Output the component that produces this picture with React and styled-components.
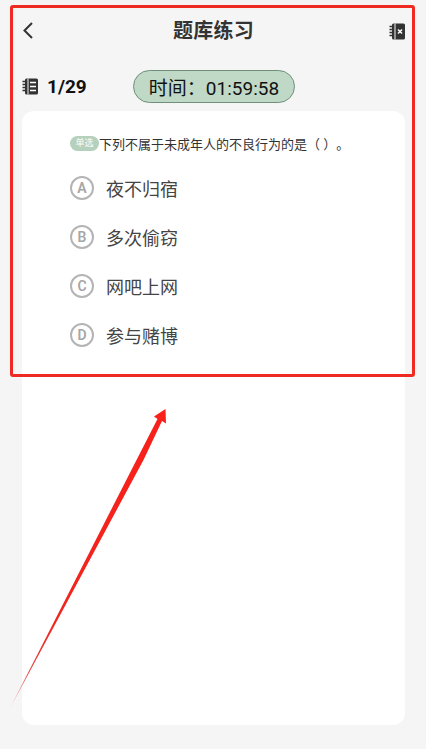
import React from 'react';
import styled, { createGlobalStyle } from 'styled-components';

const GlobalStyle = createGlobalStyle`
  html, body {
    margin: 0;
    padding: 0;
    background: #f5f5f5;
  }
  * {
    box-sizing: border-box;
  }
`;

const Page = styled.div`
  position: relative;
  width: 426px;
  height: 749px;
  overflow: hidden;
  background: #f5f5f5;
  font-family: Roboto, "Noto Sans CJK SC", sans-serif;
  color: #333;
`;

const Header = styled.header`
  height: 62px;
  padding: 0 21px 0 22px;
  display: flex;
  align-items: center;
  justify-content: space-between;
`;

const Title = styled.h1`
  margin: 0;
  font-size: 20px;
  line-height: 26px;
  font-weight: 700;
  color: #333;
  letter-spacing: 0.2px;
`;

const IconButton = styled.div`
  width: ${({ $w }) => $w}px;
  height: 20px;
  display: flex;
  align-items: center;
`;

const StatusRow = styled.div`
  height: 49px;
  padding: 0 0 0 22px;
  display: flex;
  align-items: center;
`;

const Counter = styled.div`
  width: 111px;
  display: flex;
  align-items: center;
  gap: 9px;
  font-size: 19px;
  font-weight: 700;
  color: #111;
`;

const Timer = styled.div`
  width: 162px;
  height: 33px;
  border: 1px solid #6f8f7a;
  border-radius: 17px;
  background: #c0d8c6;
  display: flex;
  align-items: center;
  justify-content: center;
  font-size: 19px;
  color: #111;
  text-spacing-trim: space-all;
`;

const Card = styled.main`
  width: 383px;
  height: 614px;
  margin-left: 22px;
  padding: 22px 0 0 48px;
  background: #fff;
  border-radius: 12px;
`;

const Question = styled.div`
  display: flex;
  align-items: center;
  height: 20px;
  font-size: 13px;
  color: #333;
  white-space: pre;
  text-spacing-trim: space-all;
`;

const Tag = styled.span`
  width: 29px;
  height: 15px;
  border-radius: 8px;
  background: #b5d0bc;
  color: #fff;
  font-size: 9px;
  line-height: 15px;
  text-align: center;
`;

const OptionList = styled.div`
  margin-top: 23px;
  display: flex;
  flex-direction: column;
  gap: 25px;
`;

const Option = styled.div`
  height: 24px;
  display: flex;
  align-items: center;
  gap: 12px;
  font-size: 18px;
  color: #444;
`;

const Letter = styled.span`
  width: 24px;
  height: 24px;
  border: 2px solid #b4b4b4;
  border-radius: 50%;
  display: flex;
  align-items: center;
  justify-content: center;
  font-size: 14px;
  font-weight: 600;
  color: #a6a6a6;
`;

const Highlight = styled.div`
  position: absolute;
  left: 10px;
  top: 5px;
  width: 405px;
  height: 372px;
  border: 3px solid #ee2a22;
  border-radius: 3px;
  pointer-events: none;
`;

const ArrowLayer = styled.svg`
  position: absolute;
  left: 0;
  top: 400px;
  pointer-events: none;
`;

const BackIcon = () => (
  <svg width="12" height="20" viewBox="0 0 12 20" fill="none">
    <path d="M10 2 L2.5 9.5 L10 17" stroke="#333" strokeWidth="2" />
  </svg>
);

const NotebookIcon = ({ crossed }) => (
  <svg width="16" height="17" viewBox="0 0 16 17">
    <rect x="3" y="0.5" width="13" height="16" rx="1.5" fill="#333" />
    <rect x="5.5" y="0.5" width="1" height="16" fill="#f5f5f5" />
    <path d="M0.5 3.5 H3 M0.5 6.5 H3 M0.5 9.5 H3 M0.5 12.5 H3" stroke="#333" strokeWidth="1.4" />
    {crossed ? (
      <path d="M9 6.5 L13 10.5 M13 6.5 L9 10.5" stroke="#fff" strokeWidth="1.5" />
    ) : (
      <path d="M8 4.5 H14 M8 8.5 H14 M8 12.5 H14" stroke="#fff" strokeWidth="1.5" />
    )}
  </svg>
);

const options = [
  ['A', '夜不归宿'],
  ['B', '多次偷窃'],
  ['C', '网吧上网'],
  ['D', '参与赌博'],
];

export default function App() {
  return (
    <Page>
      <GlobalStyle />
      <Header>
        <IconButton $w={16}>
          <BackIcon />
        </IconButton>
        <Title>题库练习</Title>
        <IconButton $w={16}>
          <NotebookIcon crossed />
        </IconButton>
      </Header>
      <StatusRow>
        <Counter>
          <NotebookIcon />
          1/29
        </Counter>
        <Timer>时间：01:59:58</Timer>
      </StatusRow>
      <Card>
        <Question>
          <Tag>单选</Tag>
          下列不属于未成年人的不良行为的是（ ）。
        </Question>
        <OptionList>
          {options.map(([letter, text]) => (
            <Option key={letter}>
              <Letter>{letter}</Letter>
              {text}
            </Option>
          ))}
        </OptionList>
      </Card>
      <Highlight />
      <ArrowLayer width="180" height="320" viewBox="0 0 180 320">
        <defs>
          <linearGradient id="tail" x1="8" y1="312" x2="160" y2="16" gradientUnits="userSpaceOnUse">
            <stop offset="0" stopColor="#ee2a22" stopOpacity="0.1" />
            <stop offset="0.12" stopColor="#dc2f2a" stopOpacity="0.85" />
            <stop offset="0.3" stopColor="#f0261e" />
            <stop offset="1" stopColor="#f8201a" />
          </linearGradient>
        </defs>
        <path
          d="M165.5 9 L166 23.5 L162 21 L143.5 60 L8 312 L136.5 60 L157.5 19 L154 16.5 Z"
          fill="url(#tail)"
        />
      </ArrowLayer>
    </Page>
  );
}
